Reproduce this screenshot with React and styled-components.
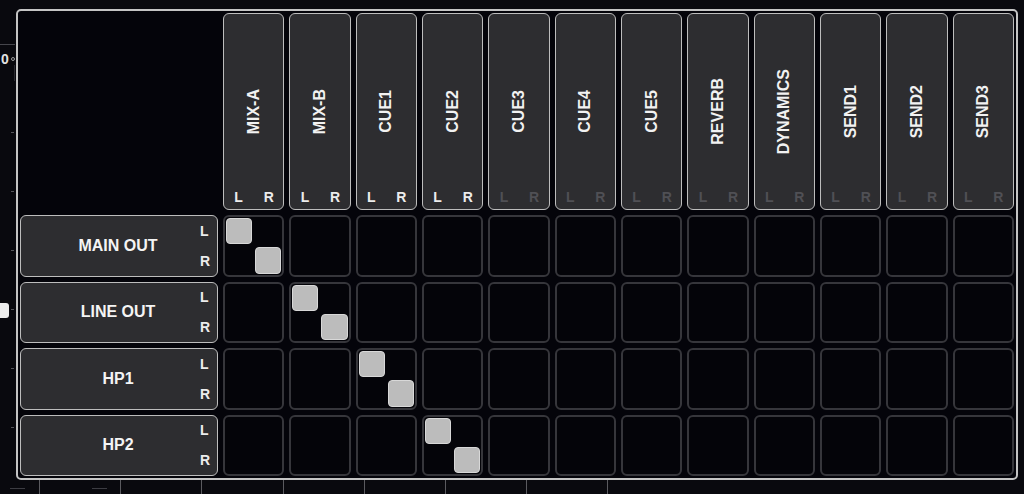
import React from 'react';
import styled, { createGlobalStyle } from 'styled-components';

const GlobalStyle = createGlobalStyle`
  html, body { margin: 0; padding: 0; background: #09090e; }
  body { font-family: "Liberation Sans", Arial, sans-serif; }
  * { box-sizing: border-box; }
`;

const Screen = styled.div`
  width: 1024px;
  height: 494px;
  display: flex;
  flex-direction: column;
  background: #09090e;
  overflow: hidden;
`;

const Main = styled.div`
  display: flex;
  height: 480px;
  flex: none;
`;

const Ruler = styled.div`
  position: relative;
  width: 16px;
  flex: none;
  display: flex;
  flex-direction: column;
`;

const RulerLine = styled.div`
  margin-top: 44px;
  width: 15px;
  height: 1px;
  background: #46464c;
`;

const ZeroMark = styled.div`
  margin-top: 8px;
  display: flex;
  align-items: center;
  gap: 2px;
  padding-left: 1px;
  font-size: 14px;
  line-height: 12px;
  font-weight: 700;
  color: #e2e2e2;
`;

const ZeroDot = styled.span`
  width: 4px;
  height: 4px;
  border-radius: 50%;
  border: 1px solid #9a9a9a;
`;

const ZeroStem = styled.div`
  margin-left: 14px;
  width: 1px;
  height: 16px;
  background: #2a2a30;
`;

const Ticks = styled.div`
  margin-top: 51px;
  display: flex;
  flex-direction: column;
  gap: 58px;
`;

const Tick = styled.div`
  margin-left: 11px;
  width: 3px;
  height: 1px;
  background: #55555a;
`;

const Thumb = styled.div`
  position: absolute;
  left: 0;
  top: 303px;
  width: 9px;
  height: 15px;
  background: #ececec;
  border-radius: 0 3px 3px 0;
`;

const Frame = styled.div`
  margin-top: 9px;
  width: 1002px;
  height: 471px;
  border: 2px solid #c4c4c4;
  border-radius: 5px;
  padding: 2px;
  background: #04040a;
  display: grid;
  grid-template-columns: 198px repeat(12, 1fr);
  grid-template-rows: 197px repeat(4, 1fr);
  gap: 5px;
`;

const Corner = styled.div``;

const Header = styled.div`
  display: grid;
  background: #2d2d30;
  border: 1.5px solid #bdbdbd;
  border-radius: 6px;
  & > * { grid-area: 1 / 1; }
`;

const HeaderLabel = styled.span`
  align-self: center;
  justify-self: center;
  writing-mode: vertical-rl;
  transform: rotate(180deg);
  font-size: 16px;
  font-weight: 700;
  color: #f2f2f2;
  line-height: 1;
`;

const HeaderFooter = styled.div`
  align-self: end;
  display: grid;
  grid-template-columns: 1fr 1fr;
  column-gap: 3px;
  padding: 0 1px 5px;
  justify-items: center;
  font-size: 14px;
  font-weight: 700;
  line-height: 14px;
  color: ${(p) => (p.$active ? '#ececec' : '#505055')};
`;

const RowLabel = styled.div`
  display: grid;
  background: #2d2d30;
  border: 1.5px solid #bdbdbd;
  border-radius: 6px;
  & > * { grid-area: 1 / 1; }
`;

const RowName = styled.span`
  align-self: center;
  justify-self: center;
  font-size: 16px;
  font-weight: 700;
  color: #f4f4f4;
  margin-right: 2px;
`;

const RowChannels = styled.div`
  justify-self: end;
  display: grid;
  grid-template-rows: 1fr 1fr;
  row-gap: 3px;
  padding: 1px 7px 1px 0;
  align-items: center;
  font-size: 14px;
  font-weight: 700;
  color: #ececec;
`;

const Cell = styled.div`
  display: grid;
  grid-template-columns: 1fr 1fr;
  grid-template-rows: 1fr 1fr;
  gap: 3px;
  padding: 1px;
  background: #040409;
  border: 2px solid #36363b;
  border-radius: 6px;
`;

const Point = styled.div`
  border-radius: 4px;
  background: ${(p) => (p.$on ? '#bcbcbc' : 'transparent')};
  border: 1px solid ${(p) => (p.$on ? '#d8d8d8' : 'transparent')};
`;

const Bottom = styled.div`
  flex: 1;
  display: flex;
`;

const Lead = styled.div`
  width: 39px;
  flex: none;
  padding: 8px 0 0 10px;
`;

const Segment = styled.div`
  width: ${(p) => (p.$grow ? 'auto' : '81.2px')};
  flex: ${(p) => (p.$grow ? '1' : 'none')};
  border-left: 1px solid #5a5a5f;
  padding: 8px 0 0 ${(p) => p.$dashAt || 0}px;
`;

const Dash = styled.div`
  width: 15px;
  height: 1px;
  background: #3c3c42;
`;

const columns = [
  'MIX-A', 'MIX-B', 'CUE1', 'CUE2', 'CUE3', 'CUE4',
  'CUE5', 'REVERB', 'DYNAMICS', 'SEND1', 'SEND2', 'SEND3',
];

const rows = ['MAIN OUT', 'LINE OUT', 'HP1', 'HP2'];

export default function App() {
  return (
    <Screen>
      <GlobalStyle />
      <Main>
        <Ruler>
          <RulerLine />
          <ZeroMark>
            0<ZeroDot />
          </ZeroMark>
          <ZeroStem />
          <Ticks>
            {[0, 1, 2, 3, 4, 5].map((i) => (
              <Tick key={i} />
            ))}
          </Ticks>
          <Thumb />
        </Ruler>
        <Frame>
          <Corner />
          {columns.map((c, i) => (
            <Header key={c}>
              <HeaderLabel>{c}</HeaderLabel>
              <HeaderFooter $active={i < 4}>
                <span>L</span>
                <span>R</span>
              </HeaderFooter>
            </Header>
          ))}
          {rows.map((r, ri) => (
            <React.Fragment key={r}>
              <RowLabel>
                <RowName>{r}</RowName>
                <RowChannels>
                  <span>L</span>
                  <span>R</span>
                </RowChannels>
              </RowLabel>
              {columns.map((c, ci) => {
                const on = ci === ri;
                return (
                  <Cell key={c}>
                    <Point $on={on} />
                    <Point />
                    <Point />
                    <Point $on={on} />
                  </Cell>
                );
              })}
            </React.Fragment>
          ))}
        </Frame>
      </Main>
      <Bottom>
        <Lead>
          <Dash />
        </Lead>
        <Segment $dashAt={52}>
          <Dash />
        </Segment>
        {[0, 1, 2, 3, 4, 5].map((i) => (
          <Segment key={i} />
        ))}
        <Segment $grow />
      </Bottom>
    </Screen>
  );
}
